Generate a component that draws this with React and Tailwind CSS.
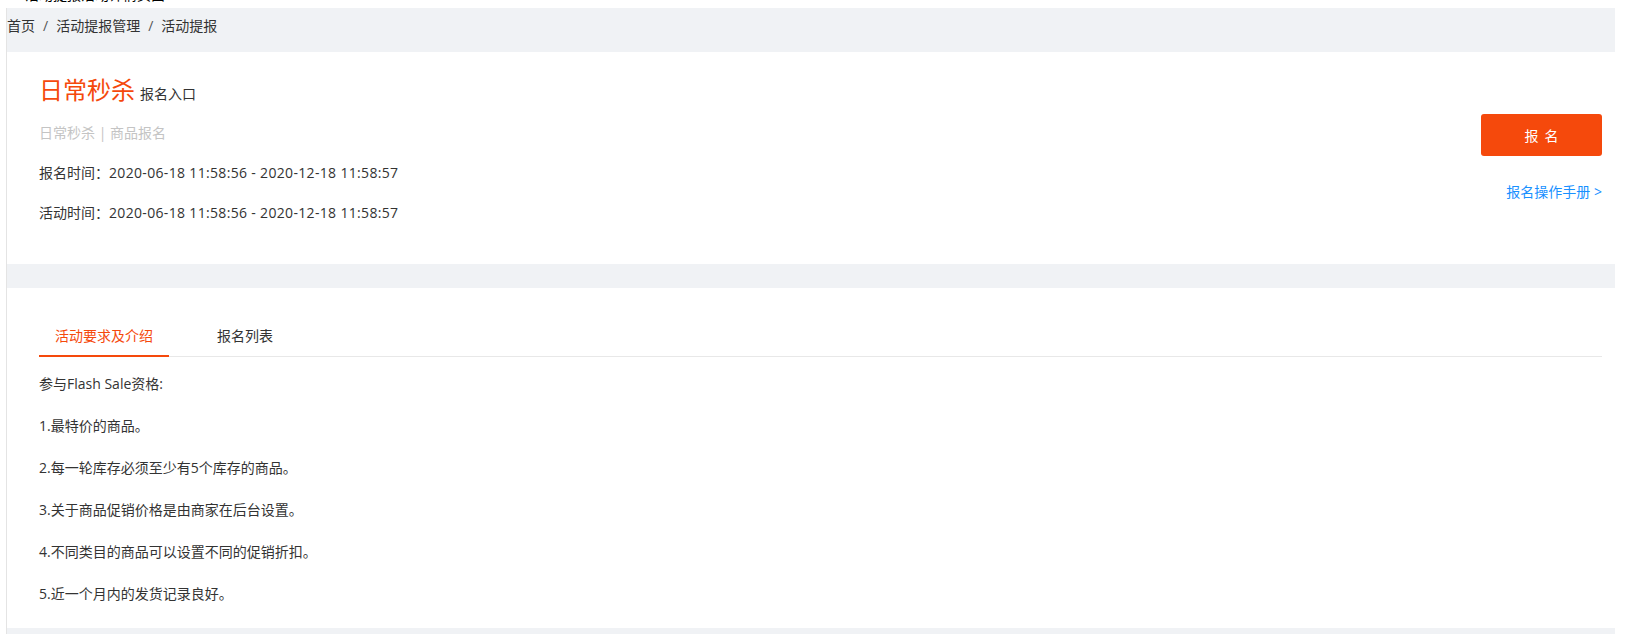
export default function App() {
  const font = { fontFamily: '"Open Sans", "Noto Sans CJK SC", sans-serif' }
  const rules = [
    '参与Flash Sale资格:',
    '1.最特价的商品。',
    '2.每一轮库存必须至少有5个库存的商品。',
    '3.关于商品促销价格是由商家在后台设置。',
    '4.不同类目的商品可以设置不同的促销折扣。',
    '5.近一个月内的发货记录良好。',
  ]

  return (
    <div className="min-h-screen bg-white text-[#333]" style={font}>
      {/* clipped page title */}
      <div className="h-[8px] overflow-hidden pl-[25px]">
        <div className="-mt-[15px] text-[14px] leading-[20px] text-black">活动提报活动详情页面</div>
      </div>

      <div className="ml-[6px] w-[1609px] border-l border-[#e4e4e4] bg-[#f0f2f5] pb-[7px]">
        {/* Breadcrumb */}
        <div className="h-[44px] pt-[7px] text-[14px] leading-[22px] text-[#333] flex">
          <span>首页</span>
          <span className="mx-[8px] text-[#555]">/</span>
          <span>活动提报管理</span>
          <span className="mx-[8px] text-[#555]">/</span>
          <span>活动提报</span>
        </div>

        {/* Activity header */}
        <div className="bg-white flex justify-between h-[212px]">
          <div className="pl-[32px] pt-[23px]">
            <div className="flex items-baseline">
              <span className="text-[24px] leading-[30px] text-[#f5490c]">日常秒杀</span>
              <span className="ml-[5px] text-[14px] text-[#333]">报名入口</span>
            </div>
            <div className="mt-[18px] text-[14px] leading-[20px] text-[#c4c4c4]">日常秒杀 | 商品报名</div>
            <div className="mt-[20px] text-[14px] leading-[20px] text-[#333]">
              报名时间：<span className="tracking-[0.33px]">2020-06-18 11:58:56 - 2020-12-18 11:58:57</span>
            </div>
            <div className="mt-[20px] text-[14px] leading-[20px] text-[#333]">
              活动时间：<span className="tracking-[0.33px]">2020-06-18 11:58:56 - 2020-12-18 11:58:57</span>
            </div>
          </div>
          <div className="pt-[62px] pr-[13px] flex flex-col items-end">
            <button className="w-[121px] h-[42px] rounded-[3px] bg-[#f5490c] text-white text-[14px] tracking-[6px] pl-[6px]">报名</button>
            <a className="mt-[26px] text-[14px] leading-[20px] text-[#1890ff] cursor-pointer">报名操作手册 &gt;</a>
          </div>
        </div>

        <div className="h-[24px]" />

        {/* Detail card */}
        <div className="bg-white pl-[32px] pr-[13px] pt-[26px] pb-[23px]">
          <div className="flex border-b border-[#e8e8e8]">
            <div className="px-[16px] pt-[11px] pb-[7px] text-[14px] leading-[22px] text-[#f5490c] border-b-2 border-[#f5490c] -mb-px">活动要求及介绍</div>
            <div className="ml-[32px] px-[16px] pt-[11px] pb-[9px] text-[14px] leading-[22px] text-[#333]">报名列表</div>
          </div>
          <div className="mt-[16px] flex flex-col gap-[20px] text-[14px] leading-[22px] text-[#333]">
            {rules.map(r => (
              <p key={r}>{r}</p>
            ))}
          </div>
        </div>
      </div>
    </div>
  )
}
